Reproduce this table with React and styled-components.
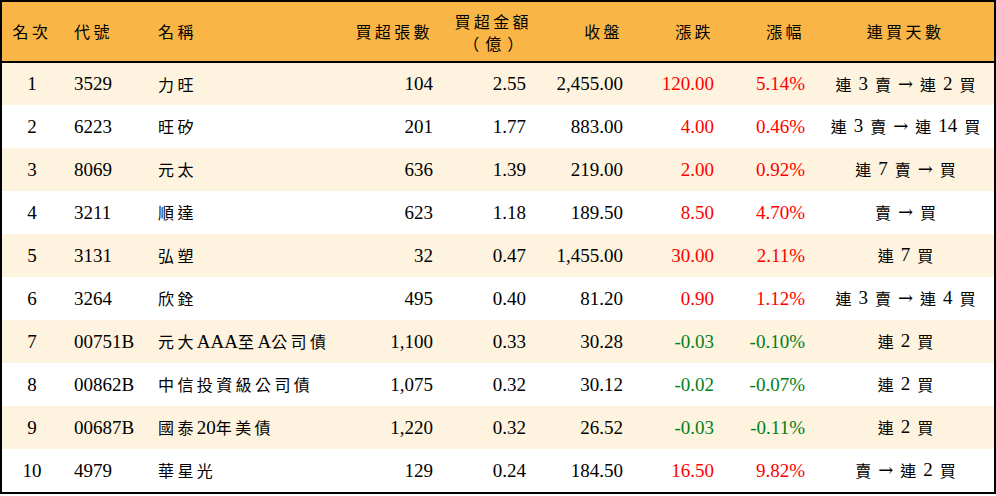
import React from 'react';
import styled, { createGlobalStyle } from 'styled-components';

const GlobalStyle = createGlobalStyle`
  html, body {
    margin: 0;
    padding: 0;
    background: #FFF;
  }
`;

const columns = [
  { key: 'rank', label: '名次', width: 60, align: 'center' },
  { key: 'code', label: '代號', width: 84, align: 'left' },
  { key: 'name', label: '名稱', width: 200, align: 'left' },
  { key: 'lots', label: '買超張數', width: 99, align: 'right' },
  { key: 'amount', label: '買超金額', sub: ['（', '億', '）'], width: 93, align: 'right' },
  { key: 'close', label: '收盤', width: 97, align: 'right' },
  { key: 'change', label: '漲跌', width: 91, align: 'right', tone: true },
  { key: 'pct', label: '漲幅', width: 91, align: 'right', tone: true },
  { key: 'streak', label: '連買天數', width: 177, align: 'center', streak: true },
];

const rows = [
  ['1', '3529', '力旺', '104', '2.55', '2,455.00', '120.00', '5.14%', '連 3 賣 → 連 2 買'],
  ['2', '6223', '旺矽', '201', '1.77', '883.00', '4.00', '0.46%', '連 3 賣 → 連 14 買'],
  ['3', '8069', '元太', '636', '1.39', '219.00', '2.00', '0.92%', '連 7 賣 → 買'],
  ['4', '3211', '順達', '623', '1.18', '189.50', '8.50', '4.70%', '賣 → 買'],
  ['5', '3131', '弘塑', '32', '0.47', '1,455.00', '30.00', '2.11%', '連 7 買'],
  ['6', '3264', '欣銓', '495', '0.40', '81.20', '0.90', '1.12%', '連 3 賣 → 連 4 買'],
  ['7', '00751B', '元大AAA至A公司債', '1,100', '0.33', '30.28', '-0.03', '-0.10%', '連 2 買'],
  ['8', '00862B', '中信投資級公司債', '1,075', '0.32', '30.12', '-0.02', '-0.07%', '連 2 買'],
  ['9', '00687B', '國泰20年美債', '1,220', '0.32', '26.52', '-0.03', '-0.11%', '連 2 買'],
  ['10', '4979', '華星光', '129', '0.24', '184.50', '16.50', '9.82%', '賣 → 連 2 買'],
];

const Frame = styled.div`
  width: 996px;
  box-sizing: border-box;
  border: 2px solid #000;
  font-family: "Liberation Serif", "Noto Sans CJK TC", serif;
  color: #000;
`;

const Table = styled.table`
  width: 100%;
  border-collapse: collapse;
  table-layout: fixed;
`;

const HeadRow = styled.tr`
  background: #F9B647;
  height: 60px;
  border-bottom: 2px solid #000;
`;

const HeadCell = styled.th`
  font-weight: normal;
  font-size: 19px;
  line-height: 20px;
  text-align: ${(p) => p.$align};
  padding: 0 ${(p) => (p.$align === 'right' ? (p.$stacked ? 6 : 12) : 0)}px 0
    ${(p) => (p.$align === 'left' ? 12 : 0)}px;
  vertical-align: middle;
`;

const Stack = styled.span`
  display: inline-flex;
  flex-direction: column;
  align-items: center;
  padding-top: 1px;
`;

const StackLine = styled.span`
  display: flex;
  justify-content: center;
  gap: ${(p) => p.$gap || 0}px;
  height: 22px;
  line-height: 22px;
  white-space: nowrap;
`;

const Glyph = styled.span`
  font-family: "Noto Sans CJK TC", sans-serif;
  font-size: 16px;
`;

const BodyRow = styled.tr`
  height: 43px;
  background: ${(p) => (p.$striped ? '#FEF3DE' : '#FFF')};
`;

const Cell = styled.td`
  font-size: 19px;
  line-height: 22px;
  padding: 0 ${(p) => (p.$align === 'right' ? 12 : 0)}px 0
    ${(p) => (p.$align === 'left' ? 12 : 0)}px;
  text-align: ${(p) => p.$align};
  vertical-align: middle;
  white-space: nowrap;
  color: ${(p) => (p.$tone === 'up' ? '#FF0000' : p.$tone === 'down' ? '#00801A' : '#000')};
`;

const Han = styled.span`
  font-family: "Noto Sans CJK TC", sans-serif;
  font-size: 16px;
  letter-spacing: ${(p) => (p.$tight ? 0 : 3.4)}px;
`;

const Streak = styled.span`
  display: inline-flex;
  align-items: center;
  gap: 7px;
`;

const Arrow = styled.span`
  font-family: "DejaVu Serif", serif;
  font-size: 18px;
`;

const CJK = /[\u3000-\u9fff\uff00-\uffef]/;

// wrap runs of CJK characters so they get their own size and spacing
const withHan = (text) =>
  text.split(/([\u3000-\u9fff\uff00-\uffef]+)/).map((part, i) =>
    CJK.test(part) ? <Han key={i}>{part}</Han> : part
  );

const renderStreak = (text) => (
  <Streak>
    {text.split(' ').map((tok, i) => {
      if (tok === '→') return <Arrow key={i}>{tok}</Arrow>;
      if (CJK.test(tok)) {
        return (
          <Han key={i} $tight>
            {tok}
          </Han>
        );
      }
      return <span key={i}>{tok}</span>;
    })}
  </Streak>
);

const toneOf = (value) => (value.startsWith('-') ? 'down' : 'up');

const App = () => (
  <>
    <GlobalStyle />
    <Frame>
      <Table>
        <colgroup>
          {columns.map((c) => (
            <col key={c.key} style={{ width: c.width }} />
          ))}
        </colgroup>
        <thead>
          <HeadRow>
            {columns.map((c) => (
              <HeadCell key={c.key} $align={c.align} $stacked={!!c.sub}>
                {c.sub ? (
                  <Stack>
                    <StackLine>{withHan(c.label)}</StackLine>
                    <StackLine $gap={6}>
                      {c.sub.map((ch) => (
                        <Glyph key={ch}>{ch}</Glyph>
                      ))}
                    </StackLine>
                  </Stack>
                ) : (
                  withHan(c.label)
                )}
              </HeadCell>
            ))}
          </HeadRow>
        </thead>
        <tbody>
          {rows.map((r, i) => (
            <BodyRow key={r[0]} $striped={i % 2 === 0}>
              {columns.map((c, j) => (
                <Cell key={c.key} $align={c.align} $tone={c.tone ? toneOf(r[j]) : undefined}>
                  {c.streak ? renderStreak(r[j]) : withHan(r[j])}
                </Cell>
              ))}
            </BodyRow>
          ))}
        </tbody>
      </Table>
    </Frame>
  </>
);

export default App;
